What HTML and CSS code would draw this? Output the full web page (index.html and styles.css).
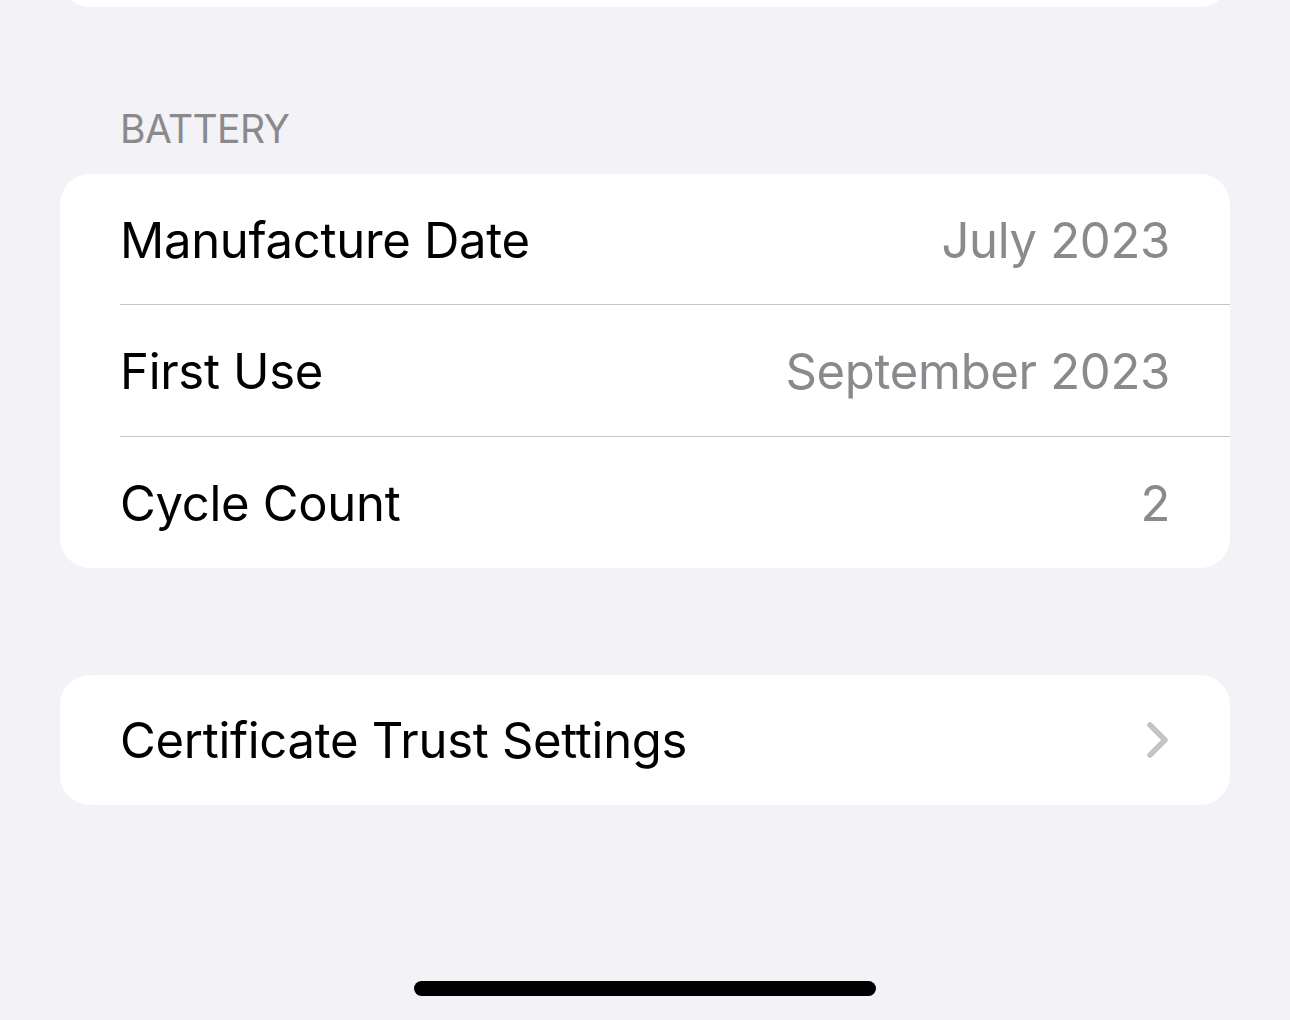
FILE: index.html
```html
<!DOCTYPE html>
<html lang="en">
<head>
<meta charset="utf-8">
<title>About - Battery</title>
<link rel="stylesheet" href="styles.css">
</head>
<body>
<div class="screen">
  <div class="card card-top"></div>

  <div class="section-header">BATTERY</div>
  <div class="card">
    <div class="row">
      <span class="label">Manufacture Date</span>
      <span class="value">July 2023</span>
    </div>
    <div class="row">
      <span class="label">First Use</span>
      <span class="value">September 2023</span>
    </div>
    <div class="row">
      <span class="label">Cycle Count</span>
      <span class="value">2</span>
    </div>
  </div>

  <div class="card card-link">
    <div class="row">
      <span class="label">Certificate Trust Settings</span>
      <svg class="chevron" width="24" height="38" viewBox="0 0 24 38" aria-hidden="true">
        <polyline points="4,4 19,19 4,34" fill="none" stroke="#c4c4c7" stroke-width="5.5" stroke-linecap="round" stroke-linejoin="round"/>
      </svg>
    </div>
  </div>

  <div class="home-indicator"></div>
</div>
</body>
</html>
```

FILE: styles.css
```css
html, body {
  margin: 0;
  padding: 0;
}

body {
  background: #f2f2f7;
  font-family: "Inter", "Roboto", "Liberation Sans", sans-serif;
  color: #000;
  -webkit-font-smoothing: antialiased;
}

.screen {
  position: relative;
  width: 1290px;
  height: 1020px;
  overflow: hidden;
  display: flex;
  flex-direction: column;
}

.card {
  background: #fff;
  border-radius: 30px;
  margin: 0 60px;
  overflow: hidden;
  flex: none;
}

.card-top {
  height: 107px;
  margin-top: -100px;
}

.section-header {
  padding: 98px 0 21px 120px;
  font-size: 39px;
  line-height: 48px;
  color: #8a8a8e;
  letter-spacing: -0.6px;
}

.row {
  display: flex;
  align-items: center;
  justify-content: space-between;
  height: 132px;
  box-sizing: border-box;
  margin-left: 60px;
  padding-right: 60px;
  padding-top: 2px;
}

.row:first-child {
  height: 130px;
}

.row + .row {
  border-top: 1px solid #c6c6c8;
}

.label {
  font-size: 49px;
  letter-spacing: -0.3px;
}

.value {
  font-size: 49px;
  letter-spacing: -0.3px;
  color: #8a8a8e;
}

.card-link {
  margin-top: 107px;
}

.card-link .row {
  height: 130px;
  padding-top: 0;
}

.chevron {
  display: block;
}

.home-indicator {
  position: absolute;
  left: 414px;
  bottom: 24px;
  width: 462px;
  height: 15px;
  border-radius: 8px;
  background: #000;
}
```
